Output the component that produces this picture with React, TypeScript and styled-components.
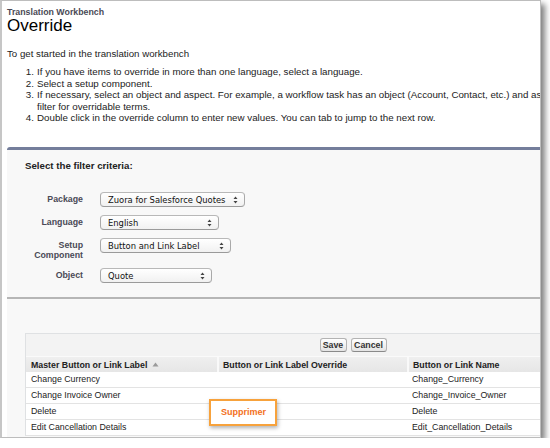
import React from "react";
import styled, { createGlobalStyle } from "styled-components";

const GlobalStyle = createGlobalStyle`
  html, body { margin: 0; padding: 0; background: #fff; }
  body { font-family: "Liberation Sans", Arial, sans-serif; color: #222; }
  * { box-sizing: border-box; }
`;

const Frame = styled.div`
  width: 541px;
  height: 438px;
  border: 1px solid #bdbdbd;
  border-left: 2px solid #c6c6c6;
  box-shadow: 4px 4px 6px rgba(0, 0, 0, 0.5);
  background: #fff;
  overflow: hidden;
`;

const Page = styled.div`
  width: 720px;
  padding: 6px 0 0 5px;
`;

const PageType = styled.div`
  font-size: 8.8px;
  font-weight: bold;
  line-height: 10px;
  color: #4a4a56;
`;

const Title = styled.h1`
  margin: 0;
  font-size: 17px;
  font-weight: normal;
  line-height: 18px;
  color: #000;
`;

const Intro = styled.p`
  margin: 13px 0 0;
  font-size: 9.7px;
  line-height: 11.5px;
  color: #222;
`;

const Steps = styled.ol`
  margin: 6.5px 0 0;
  padding: 0;
  list-style: none;
  font-size: 9.75px;
  line-height: 11.5px;
  color: #222;
`;

const Step = styled.li`
  display: grid;
  grid-template-columns: 27px auto;
  column-gap: 3px;
  white-space: nowrap;
`;

const StepNum = styled.span`
  text-align: right;
`;

const FilterBlock = styled.section`
  margin-top: 23.5px;
  background: #f8f8f8;
  border-top: 3px solid #747e9b;
  border-bottom: 2px solid #b6b6b6;
  border-top-left-radius: 3px;
  padding: 10px 0 14px;
`;

const FilterTitle = styled.h3`
  margin: 0;
  padding-left: 18px;
  font-size: 9.7px;
  font-weight: bold;
  line-height: 12px;
  color: #222;
`;

const FormGrid = styled.div`
  margin-top: 20px;
  display: grid;
  grid-template-columns: 76px auto;
  column-gap: 17px;
  row-gap: 8px;
  justify-content: start;
  align-items: start;
`;

const FieldLabel = styled.div<{ $multi?: boolean }>`
  text-align: right;
  font-size: 8.8px;
  font-weight: bold;
  color: #4a4a56;
  line-height: ${(p) => (p.$multi ? "9.5px" : "15px")};
  padding-top: ${(p) => (p.$multi ? "3px" : "0")};
`;

const SelectBox = styled.div<{ $w: number }>`
  width: ${(p) => p.$w}px;
  height: 15px;
  display: flex;
  align-items: center;
  justify-content: space-between;
  padding: 0 6px 0 7px;
  border: 1px solid #a9a9a9;
  border-top-color: #b8b8b8;
  border-bottom-color: #9a9a9a;
  border-radius: 4px;
  background: linear-gradient(#ffffff, #f1f1f1);
  font-family: "DejaVu Sans", sans-serif;
  font-size: 8.4px;
  color: #111;
  white-space: nowrap;
`;

const ResultsBlock = styled.section`
  background: #f8f8f8;
  padding: 34px 0 0 18px;
  height: 200px;
`;

const Table = styled.div`
  width: 655px;
  border-left: 1px solid #dfe1e3;
  border-top: 1px solid #dfe1e3;
  font-size: 8.8px;
  color: #222;
`;

const ButtonBar = styled.div`
  height: 22px;
  display: flex;
  align-items: center;
  justify-content: center;
  gap: 4px;
  background: #f3f3f3;
`;

const Btn = styled.button<{ $w: number }>`
  width: ${(p) => p.$w}px;
  height: 14px;
  padding: 0;
  font-family: "Liberation Sans", Arial, sans-serif;
  font-size: 8.8px;
  font-weight: bold;
  color: #333;
  border: 1px solid #b3b3b3;
  border-bottom-color: #8a8a8a;
  border-radius: 3px;
  background: linear-gradient(#ffffff, #e4e4e4);
`;

const cols = "191px 190px 273px";

const HeaderRow = styled.div`
  display: grid;
  grid-template-columns: ${cols};
  height: 16px;
  border-top: 1px solid #fafafa;
  background: linear-gradient(#efefef, #e6e6e6);
`;

const HeaderCell = styled.div<{ $sep?: boolean }>`
  display: flex;
  align-items: center;
  gap: 5px;
  padding-left: ${(p) => (p.$sep ? "4px" : "5px")};
  border-left: ${(p) => (p.$sep ? "2px solid #f9f9f9" : "none")};
  font-weight: bold;
  color: #222;
  white-space: nowrap;
`;

const Row = styled.div`
  display: grid;
  grid-template-columns: ${cols};
  height: 16px;
  border-bottom: 1px solid #e3e3e3;
  background: #fff;
`;

const Cell = styled.div`
  position: relative;
  padding-left: 5px;
  line-height: 15px;
  white-space: nowrap;
`;

const Callout = styled.div`
  position: absolute;
  left: -8px;
  top: -5px;
  width: 68px;
  height: 27px;
  display: flex;
  align-items: center;
  padding-left: 10px;
  background: #fff;
  border: 2px solid #f7a23c;
  box-shadow: 1px 2px 4px rgba(0, 0, 0, 0.3);
  font-size: 9px;
  font-weight: bold;
  color: #f36f21;
`;

const Arrows = () => (
  <svg width="5" height="8" viewBox="0 0 5 8">
    <path d="M2.5 0.5 L4.5 3 H0.5Z M0.5 5 H4.5 L2.5 7.5Z" fill="#444" />
  </svg>
);

const SortUp = () => (
  <svg width="7" height="5" viewBox="0 0 7 5">
    <path d="M3.5 0.5 L6.5 4.5 H0.5Z" fill="#9a9a9a" />
  </svg>
);

const fields = [
  { label: ["Package"], value: "Zuora for Salesforce Quotes", w: 145 },
  { label: ["Language"], value: "English", w: 119 },
  { label: ["Setup", "Component"], value: "Button and Link Label", w: 131 },
  { label: ["Object"], value: "Quote", w: 112 },
];

const rows = [
  { master: "Change Currency", override: "", name: "Change_Currency" },
  { master: "Change Invoice Owner", override: "", name: "Change_Invoice_Owner" },
  { master: "Delete", override: "Supprimer", name: "Delete" },
  { master: "Edit Cancellation Details", override: "", name: "Edit_Cancellation_Details" },
];

export default function App() {
  return (
    <>
      <GlobalStyle />
      <Frame>
        <Page>
          <PageType>Translation Workbench</PageType>
          <Title>Override</Title>
          <Intro>To get started in the translation workbench</Intro>
          <Steps>
            <Step>
              <StepNum>1.</StepNum>
              <span>If you have items to override in more than one language, select a language.</span>
            </Step>
            <Step>
              <StepNum>2.</StepNum>
              <span>Select a setup component.</span>
            </Step>
            <Step>
              <StepNum>3.</StepNum>
              <span>
                If necessary, select an object and aspect. For example, a workflow task has an object (Account, Contact, etc.) and aspect (Subject or Comments). Use the aspect
                <br />
                filter for overridable terms.
              </span>
            </Step>
            <Step>
              <StepNum>4.</StepNum>
              <span>Double click in the override column to enter new values. You can tab to jump to the next row.</span>
            </Step>
          </Steps>

          <FilterBlock>
            <FilterTitle>Select the filter criteria:</FilterTitle>
            <FormGrid>
              {fields.map((f) => (
                <React.Fragment key={f.value}>
                  <FieldLabel $multi={f.label.length > 1}>
                    {f.label.map((l, i) => (
                      <div key={i}>{l}</div>
                    ))}
                  </FieldLabel>
                  <SelectBox $w={f.w}>
                    <span>{f.value}</span>
                    <Arrows />
                  </SelectBox>
                </React.Fragment>
              ))}
            </FormGrid>
          </FilterBlock>

          <ResultsBlock>
            <Table>
              <ButtonBar>
                <Btn $w={27}>Save</Btn>
                <Btn $w={36}>Cancel</Btn>
              </ButtonBar>
              <HeaderRow>
                <HeaderCell>
                  Master Button or Link Label <SortUp />
                </HeaderCell>
                <HeaderCell $sep>Button or Link Label Override</HeaderCell>
                <HeaderCell $sep>Button or Link Name</HeaderCell>
              </HeaderRow>
              {rows.map((r) => (
                <Row key={r.name}>
                  <Cell>{r.master}</Cell>
                  <Cell>{r.override && <Callout>{r.override}</Callout>}</Cell>
                  <Cell>{r.name}</Cell>
                </Row>
              ))}
            </Table>
          </ResultsBlock>
        </Page>
      </Frame>
    </>
  );
}
